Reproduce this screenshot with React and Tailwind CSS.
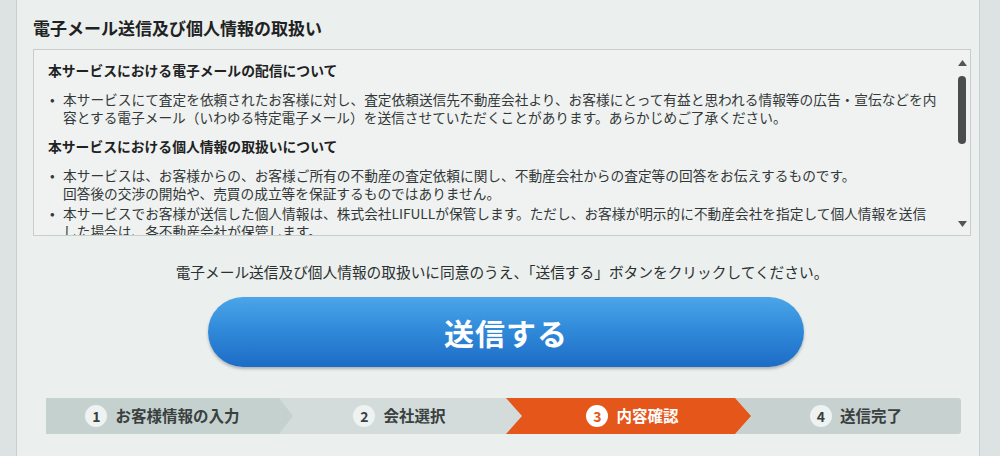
import React from "react";

const font = { fontFamily: '"Noto Sans CJK JP", "Noto Sans", sans-serif' };

function Step({ n, label, active }) {
  return (
    <div className="flex items-center justify-center gap-[8px] h-full">
      <span
        className={
          "w-[22px] h-[22px] rounded-full flex items-center justify-center text-[14px] font-bold " +
          (active ? "bg-white text-[#e4561a]" : "bg-[#eef2f1] text-[#3a3f3f]")
        }
      >
        {n}
      </span>
      <span className={"text-[15.5px] font-bold " + (active ? "text-white" : "text-[#3a3f3f]")}>{label}</span>
    </div>
  );
}

export default function App() {
  return (
    <div className="w-[1000px] h-[456px] bg-[#dde3e2] overflow-hidden" style={font}>
      <div className="ml-[16px] w-[964px] h-full bg-[#ebefee] border-l border-r border-[#c9cfce] pl-[16px] pr-[8px] pt-[17px]">
        <h1 className="text-[17px] leading-[22px] font-bold text-[#1e2222] tracking-[0px]">
          電子メール送信及び個人情報の取扱い
        </h1>
        <div className="mt-[10px] w-[938px] h-[187px] border border-[#c7cdcc] bg-[#eff2f1] flex">
          <div className="flex-1 pl-[14px] pt-[10px] overflow-hidden text-[#333838]">
            <h2 className="text-[13.8px] leading-[20px] font-bold text-[#1e2222]">
              本サービスにおける電子メールの配信について
            </h2>
            <div className="mt-[11px] flex text-[13.7px] leading-[17.5px]">
              <span className="w-[15px] shrink-0 pl-[2px]">•</span>
              <div className="whitespace-nowrap">
                本サービスにて査定を依頼されたお客様に対し、査定依頼送信先不動産会社より、お客様にとって有益と思われる情報等の広告・宣伝などを内
                <br />
                容とする電子メール（いわゆる特定電子メール）を送信させていただくことがあります。あらかじめご了承ください。
              </div>
            </div>
            <h2 className="mt-[10px] text-[13.8px] leading-[20px] font-bold text-[#1e2222]">
              本サービスにおける個人情報の取扱いについて
            </h2>
            <div className="mt-[11px] flex text-[13.7px] leading-[17.5px]">
              <span className="w-[15px] shrink-0 pl-[2px]">•</span>
              <div className="whitespace-nowrap">
                本サービスは、お客様からの、お客様ご所有の不動産の査定依頼に関し、不動産会社からの査定等の回答をお伝えするものです。
                <br />
                回答後の交渉の開始や、売買の成立等を保証するものではありません。
              </div>
            </div>
            <div className="mt-[3px] flex text-[13.7px] leading-[17.5px]">
              <span className="w-[15px] shrink-0 pl-[2px]">•</span>
              <div className="whitespace-nowrap">
                本サービスでお客様が送信した個人情報は、株式会社LIFULLが保管します。ただし、お客様が明示的に不動産会社を指定して個人情報を送信
                <br />
                した場合は、各不動産会社が保管します。
              </div>
            </div>
          </div>
          <div className="w-[16px] shrink-0 flex flex-col items-center pt-[10px] pb-[8px]">
            <svg width="9" height="6" viewBox="0 0 9 6"><path d="M0 6 L4.5 0 L9 6 Z" fill="#555" /></svg>
            <div className="mt-[10px] w-[8px] h-[68px] rounded-full bg-[#4a4d4e]" />
            <div className="flex-1" />
            <svg width="9" height="6" viewBox="0 0 9 6"><path d="M0 0 L4.5 6 L9 0 Z" fill="#555" /></svg>
          </div>
        </div>

        <p className="mt-[26px] text-center text-[14.7px] leading-[20px] text-[#2b3030]">
          電子メール送信及び個人情報の取扱いに同意のうえ、「送信する」ボタンをクリックしてください。
        </p>

        <div className="mt-[15px] flex justify-center pl-[8px]">
          <button className="w-[596px] h-[70px] rounded-full bg-gradient-to-b from-[#4ba5e8] via-[#2f88d8] to-[#1d6cc6] shadow-[0_2px_3px_rgba(0,0,0,0.25)] text-white text-[30px] font-bold tracking-[1px]">
            送信する
          </button>
        </div>

        <div className="mt-[31px] ml-[13px] w-[915px] h-[36px] flex">
          <div className="w-[247px] h-full bg-[#d3dcda]">
            <div className="h-full bg-[#c4d1ce] [clip-path:polygon(0_0,calc(100%-14px)_0,100%_50%,calc(100%-14px)_100%,0_100%)]">
              <div className="pr-[14px] h-full">
                <Step n="1" label="お客様情報の入力" />
              </div>
            </div>
          </div>
          <div className="w-[213px] h-full bg-[#d3dcda]">
            <Step n="2" label="会社選択" />
          </div>
          <div className="w-[245px] h-full bg-[linear-gradient(to_right,#d3dcda_50%,#c7d1d0_50%)]">
            <div className="h-full bg-[#e4561a] [clip-path:polygon(0_0,calc(100%-16px)_0,100%_50%,calc(100%-16px)_100%,0_100%,16px_50%)]">
              <div className="pl-[8px] h-full">
                <Step n="3" label="内容確認" active />
              </div>
            </div>
          </div>
          <div className="flex-1 h-full bg-[#c7d1d0] rounded-r-[3px]">
            <Step n="4" label="送信完了" />
          </div>
        </div>
      </div>
    </div>
  );
}
